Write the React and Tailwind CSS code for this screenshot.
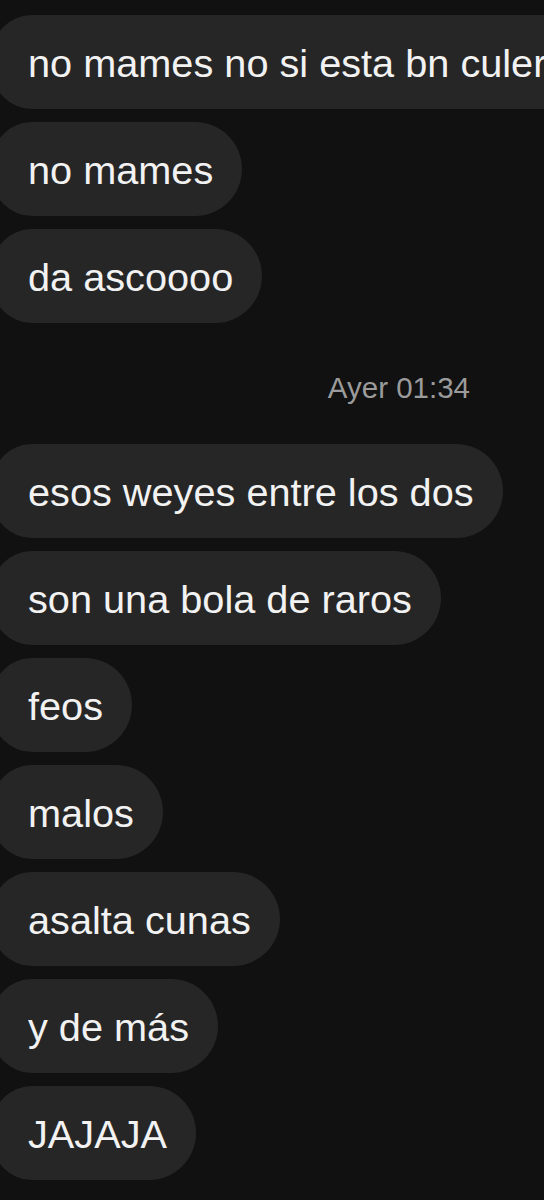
import React from "react";

const font = { fontFamily: '"Liberation Sans", Arial, sans-serif' };

function Bubble({ children }) {
  return (
    <div className="-ml-[8px] shrink-0 whitespace-nowrap rounded-l-[40px] rounded-r-[47px] bg-[#262626] pl-[36px] pr-[29px] pt-[25px] pb-[23px] text-[39.7px] leading-[46px] text-[#f2f2f2]">
      {children}
    </div>
  );
}

export default function App() {
  return (
    <div
      className="flex h-[1200px] w-[544px] flex-col items-start overflow-hidden bg-[#111111] pt-[15px]"
      style={font}
    >
      <div className="flex flex-col items-start gap-[13px]">
        <Bubble>no mames no si esta bn culero</Bubble>
        <Bubble>no mames</Bubble>
        <Bubble>da ascoooo</Bubble>
      </div>
      <div className="mt-[48px] mb-[39px] flex w-full justify-end pr-[74px] text-[29.5px] leading-[34px] text-[#9b9b9b]">
        Ayer 01:34
      </div>
      <div className="flex flex-col items-start gap-[13px]">
        <Bubble>esos weyes entre los dos</Bubble>
        <Bubble>son una bola de raros</Bubble>
        <Bubble>feos</Bubble>
        <Bubble>malos</Bubble>
        <Bubble>asalta cunas</Bubble>
        <Bubble>y de más</Bubble>
        <Bubble>JAJAJA</Bubble>
      </div>
    </div>
  );
}
